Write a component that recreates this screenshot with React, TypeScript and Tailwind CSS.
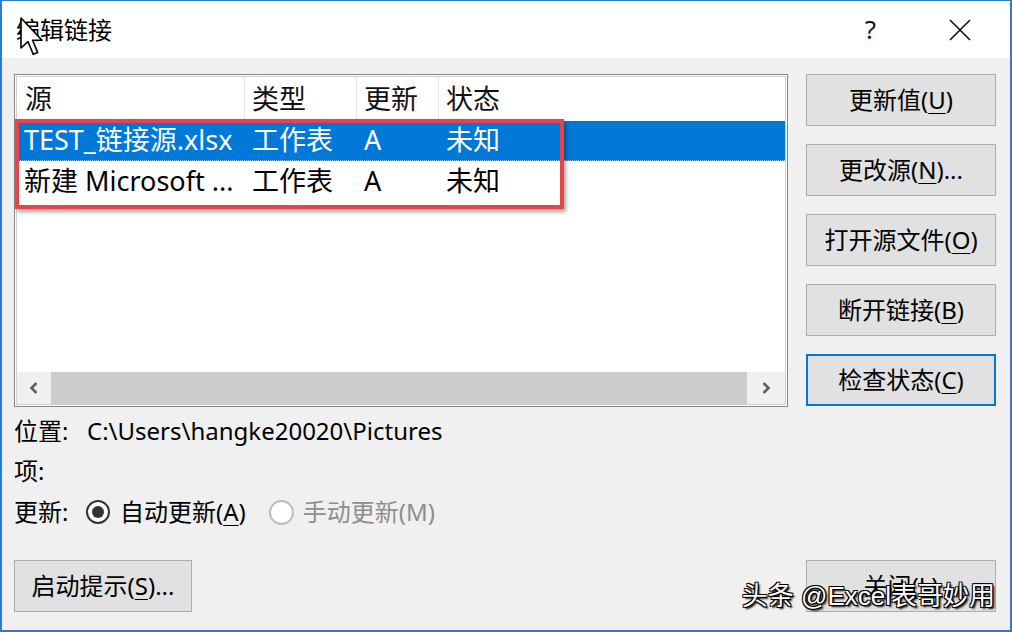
import React from "react";

const font = "font-['Noto_Sans','Noto_Sans_CJK_SC',sans-serif]";

function Btn({ label, k, tail = ")", focus = false, w = "w-[190px]" }: { label: string; k: string; tail?: string; focus?: boolean; w?: string }) {
  return (
    <div
      className={`${w} h-[52px] flex items-center justify-center bg-[#e1e1e1] text-[24px] text-black ${
        focus ? "border-2 border-[#0078d7]" : "border border-[#adadad]"
      }`}
    >
      <span>
        {label}(<span className="underline underline-offset-4 decoration-1">{k}</span>
        {tail}
      </span>
    </div>
  );
}

function Cursor() {
  return (
    <svg className="absolute left-[18px] top-[16px]" width="26" height="40" viewBox="0 0 13 20">
      <path d="M0.5 0.5 L0.5 15.5 L4 12.3 L6.6 18.6 L8.8 17.7 L6.3 11.6 L11 11.6 Z" fill="#fff" stroke="#000" strokeWidth="0.8" strokeLinejoin="round" />
    </svg>
  );
}

function Chevron({ dir }: { dir: "l" | "r" }) {
  return (
    <svg width="10" height="14" viewBox="0 0 10 14">
      <path d={dir === "l" ? "M7.5 2 L2.5 7 L7.5 12" : "M2.5 2 L7.5 7 L2.5 12"} fill="none" stroke="#606060" strokeWidth="2.6" />
    </svg>
  );
}

export default function App() {
  return (
    <div className={`${font} relative w-[1012px] h-[632px] border-2 border-[#2b7cd3] border-t-[1px] flex flex-col bg-[#f0f0f0] overflow-hidden`}>
      {/* title bar */}
      <div className="h-[57px] bg-white flex items-center pl-[14px] pr-[24px] shrink-0">
        <span className="text-[24px] text-black">编辑链接</span>
        <span className="ml-auto text-[26px] text-[#111] mr-[73px]">?</span>
        <svg width="22" height="22" viewBox="0 0 22 22" className="mr-[15px]">
          <path d="M1 1 L21 21 M21 1 L1 21" stroke="#111" strokeWidth="1.6" />
        </svg>
      </div>

      <div className="flex-1 pl-[12px] pr-[14px] pt-[16px] flex flex-col">
        <div className="flex gap-[18px]">
          {/* list */}
          <div className="relative w-[774px] h-[333px] border border-[#828790] p-px bg-white">
            <div className="h-full border border-[#d0d0d0] flex flex-col text-[27px]">
              <div className="flex h-[44px] items-center text-[#111] shrink-0">
                <div className="w-[228px] pl-[8px] h-full flex items-center border-r border-[#e5e5e5]">源</div>
                <div className="w-[112px] pl-[7px] h-full flex items-center border-r border-[#e5e5e5]">类型</div>
                <div className="w-[82px] pl-[7px] h-full flex items-center border-r border-[#e5e5e5]">更新</div>
                <div className="pl-[7px]">状态</div>
              </div>
              <div className="flex h-[40px] items-center bg-[#0078d7] text-white border-b border-dotted border-[#9cc4ea]">
                <div className="w-[228px] pl-[7px] whitespace-nowrap">TEST_链接源.xlsx</div>
                <div className="w-[112px] pl-[7px]">工作表</div>
                <div className="w-[82px] pl-[7px]">A</div>
                <div className="pl-[7px]">未知</div>
              </div>
              <div className="flex h-[40px] items-center text-black">
                <div className="w-[228px] pl-[7px] whitespace-nowrap">新建 Microsoft ...</div>
                <div className="w-[112px] pl-[7px]">工作表</div>
                <div className="w-[82px] pl-[7px]">A</div>
                <div className="pl-[7px]">未知</div>
              </div>
              <div className="flex-1" />
              <div className="h-[32px] flex bg-[#f0f0f0] shrink-0">
                <div className="w-[34px] flex items-center justify-center">
                  <Chevron dir="l" />
                </div>
                <div className="flex-1 bg-[#cdcdcd]" />
                <div className="w-[38px] flex items-center justify-center">
                  <Chevron dir="r" />
                </div>
              </div>
            </div>
            {/* red highlight */}
            <div className="absolute left-0 top-[44px] w-[549px] h-[90px] border-4 border-[#e8434b] shadow-[2px_3px_4px_rgba(0,0,0,0.35)]" />
          </div>

          {/* buttons */}
          <div className="flex flex-col gap-[18px]">
            <Btn label="更新值" k="U" />
            <Btn label="更改源" k="N" tail=")..." />
            <Btn label="打开源文件" k="O" />
            <Btn label="断开链接" k="B" />
            <Btn label="检查状态" k="C" focus />
          </div>
        </div>

        <div className="text-[24px] text-black mt-[9px] flex flex-col">
          <div className="h-[30px] flex items-center">
            <span className="w-[73px]">位置:</span>
            <span>C:\Users\hangke20020\Pictures</span>
          </div>
          <div className="h-[30px] flex items-center mt-[10px]">项:</div>
          <div className="h-[34px] flex items-center mt-[9px]">
            <span className="w-[72px]">更新:</span>
            <span className="w-[24px] h-[24px] rounded-full border-2 border-[#333] bg-white flex items-center justify-center">
              <span className="w-[12px] h-[12px] rounded-full bg-[#333]" />
            </span>
            <span className="ml-[10px]">
              自动更新(<span className="underline underline-offset-4 decoration-1">A</span>)
            </span>
            <span className="ml-[23px] w-[25px] h-[25px] rounded-full border-2 border-[#bcbcbc] bg-white" />
            <span className="ml-[9px] text-[#8d8d8d]">手动更新(M)</span>
          </div>
        </div>

        <div className="mt-auto mb-[18px] flex justify-between">
          <Btn label="启动提示" k="S" tail=")..." w="w-[178px]" />
          <Btn label="关闭" k="L" />
        </div>
      </div>

      <Cursor />
      <div className="absolute right-[15px] bottom-[14px] text-[26px] text-white font-['Liberation_Sans','Noto_Sans_CJK_SC',sans-serif] [text-shadow:1px_1px_0_#000,-1px_-1px_0_#000,1px_-1px_0_#000,-1px_1px_0_#000,2px_2px_2px_#000]">
        头条 @Excel表哥妙用
      </div>
    </div>
  );
}
